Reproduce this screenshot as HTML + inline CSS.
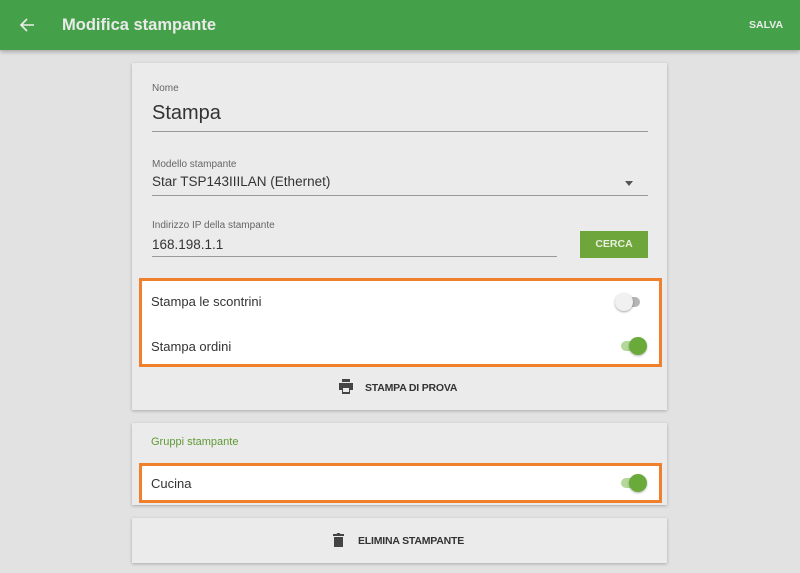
<!DOCTYPE html><html><head><style>
body{margin:0;width:800px;height:573px;background:#e2e2e2;font-family:"Liberation Sans",sans-serif;position:relative;overflow:hidden;color:#333}
.hdr{position:absolute;left:0;top:0;width:800px;height:50px;background:#45a149;box-shadow:0 2px 4px rgba(0,0,0,.25)}
.card{position:absolute;left:132px;width:535px;background:#ebebeb;box-shadow:0 1px 3px rgba(0,0,0,.25)}
.a{position:absolute}
.lbl{font-size:10px;color:#666}
.line{position:absolute;height:1px;background:#999}
.ob{position:absolute;left:139px;width:517px;border:3px solid #f0802c;background:#fff}
.sw{position:absolute;width:18px;height:18px;border-radius:50%}
</style></head><body>
<div class="hdr">
<svg class="a" style="left:19px;top:17px" width="16" height="16" viewBox="0 0 16 16"><path d="M15 8H2M8 2L2 8l6 6" stroke="#eee" stroke-width="1.6" fill="none"/></svg>
<div class="a" style="left:62px;top:16px;font-size:16.5px;font-weight:bold;color:#eaeaea">Modifica stampante</div>
<div class="a" style="left:749px;top:19px;font-size:10.5px;font-weight:bold;color:#eaeaea">SALVA</div>
</div>
<div class="card" style="top:63px;height:347px">
<div class="a lbl" style="left:20px;top:20px">Nome</div>
<div class="a" style="left:20px;top:39px;font-size:20px;color:#333">Stampa</div>
<div class="line" style="left:20px;top:68px;width:496px"></div>
<div class="a lbl" style="left:20px;top:96px">Modello stampante</div>
<div class="a" style="left:20px;top:111px;font-size:13.5px">Star TSP143IIILAN (Ethernet)</div>
<div class="a" style="left:493px;top:118px;border:4px solid transparent;border-top:5px solid #555"></div>
<div class="line" style="left:20px;top:132px;width:496px"></div>
<div class="a lbl" style="left:20px;top:157px">Indirizzo IP della stampante</div>
<div class="a" style="left:20px;top:174px;font-size:13.5px">168.198.1.1</div>
<div class="line" style="left:20px;top:193px;width:405px"></div>
<div class="a" style="left:448px;top:168px;width:68px;height:27px;background:#6ea63c;font-size:10.5px;font-weight:bold;text-align:center;line-height:27px;color:#e8f0e0">CERCA</div>
<svg class="a" style="left:206px;top:316px" width="16" height="15" viewBox="0 0 16 15"><path d="M4 0h8v3H4zM1 4h14v7h-3v4H4v-4H1z" fill="#444"/><rect x="5" y="9" width="6" height="4" fill="#ebebeb"/></svg>
<div class="a" style="left:233px;top:319px;font-size:10.5px;font-weight:bold;color:#333;letter-spacing:-0.2px">STAMPA DI PROVA</div>
</div>
<div class="ob" style="top:278px;height:83px">
<div class="a" style="left:9px;top:13px;font-size:13px">Stampa le scontrini</div>
<div class="a" style="left:9px;top:58px;font-size:13px">Stampa ordini</div>
<div class="a" style="left:476px;top:16px;width:22px;height:10px;border-radius:5px;background:#b5b5b5"></div>
<div class="sw" style="left:473px;top:12px;background:#f1f1f1;box-shadow:0 1px 2px rgba(0,0,0,.35)"></div>
<div class="a" style="left:479px;top:60px;width:22px;height:10px;border-radius:5px;background:#b4d89a"></div>
<div class="sw" style="left:487px;top:56px;background:#6aaa3a;box-shadow:0 1px 2px rgba(0,0,0,.3)"></div>
</div>
<div class="card" style="top:423px;height:82px">
<div class="a" style="left:19px;top:13px;font-size:11px;color:#5f9a35">Gruppi stampante</div>
</div>
<div class="ob" style="top:463px;height:34px">
<div class="a" style="left:9px;top:10px;font-size:13px">Cucina</div>
<div class="a" style="left:479px;top:12px;width:22px;height:10px;border-radius:5px;background:#b4d89a"></div>
<div class="sw" style="left:487px;top:8px;background:#6aaa3a;box-shadow:0 1px 2px rgba(0,0,0,.3)"></div>
</div>
<div class="card" style="top:518px;height:45px">
<svg class="a" style="left:201px;top:15px" width="11" height="14" viewBox="0 0 11 14"><path d="M0 1h3.5l1-1h2l1 1H11v2H0zM1 4h9v10H1z" fill="#444"/></svg>
<div class="a" style="left:226px;top:17px;font-size:10.5px;font-weight:bold;color:#333;letter-spacing:-0.2px">ELIMINA STAMPANTE</div>
</div>
</body></html>
